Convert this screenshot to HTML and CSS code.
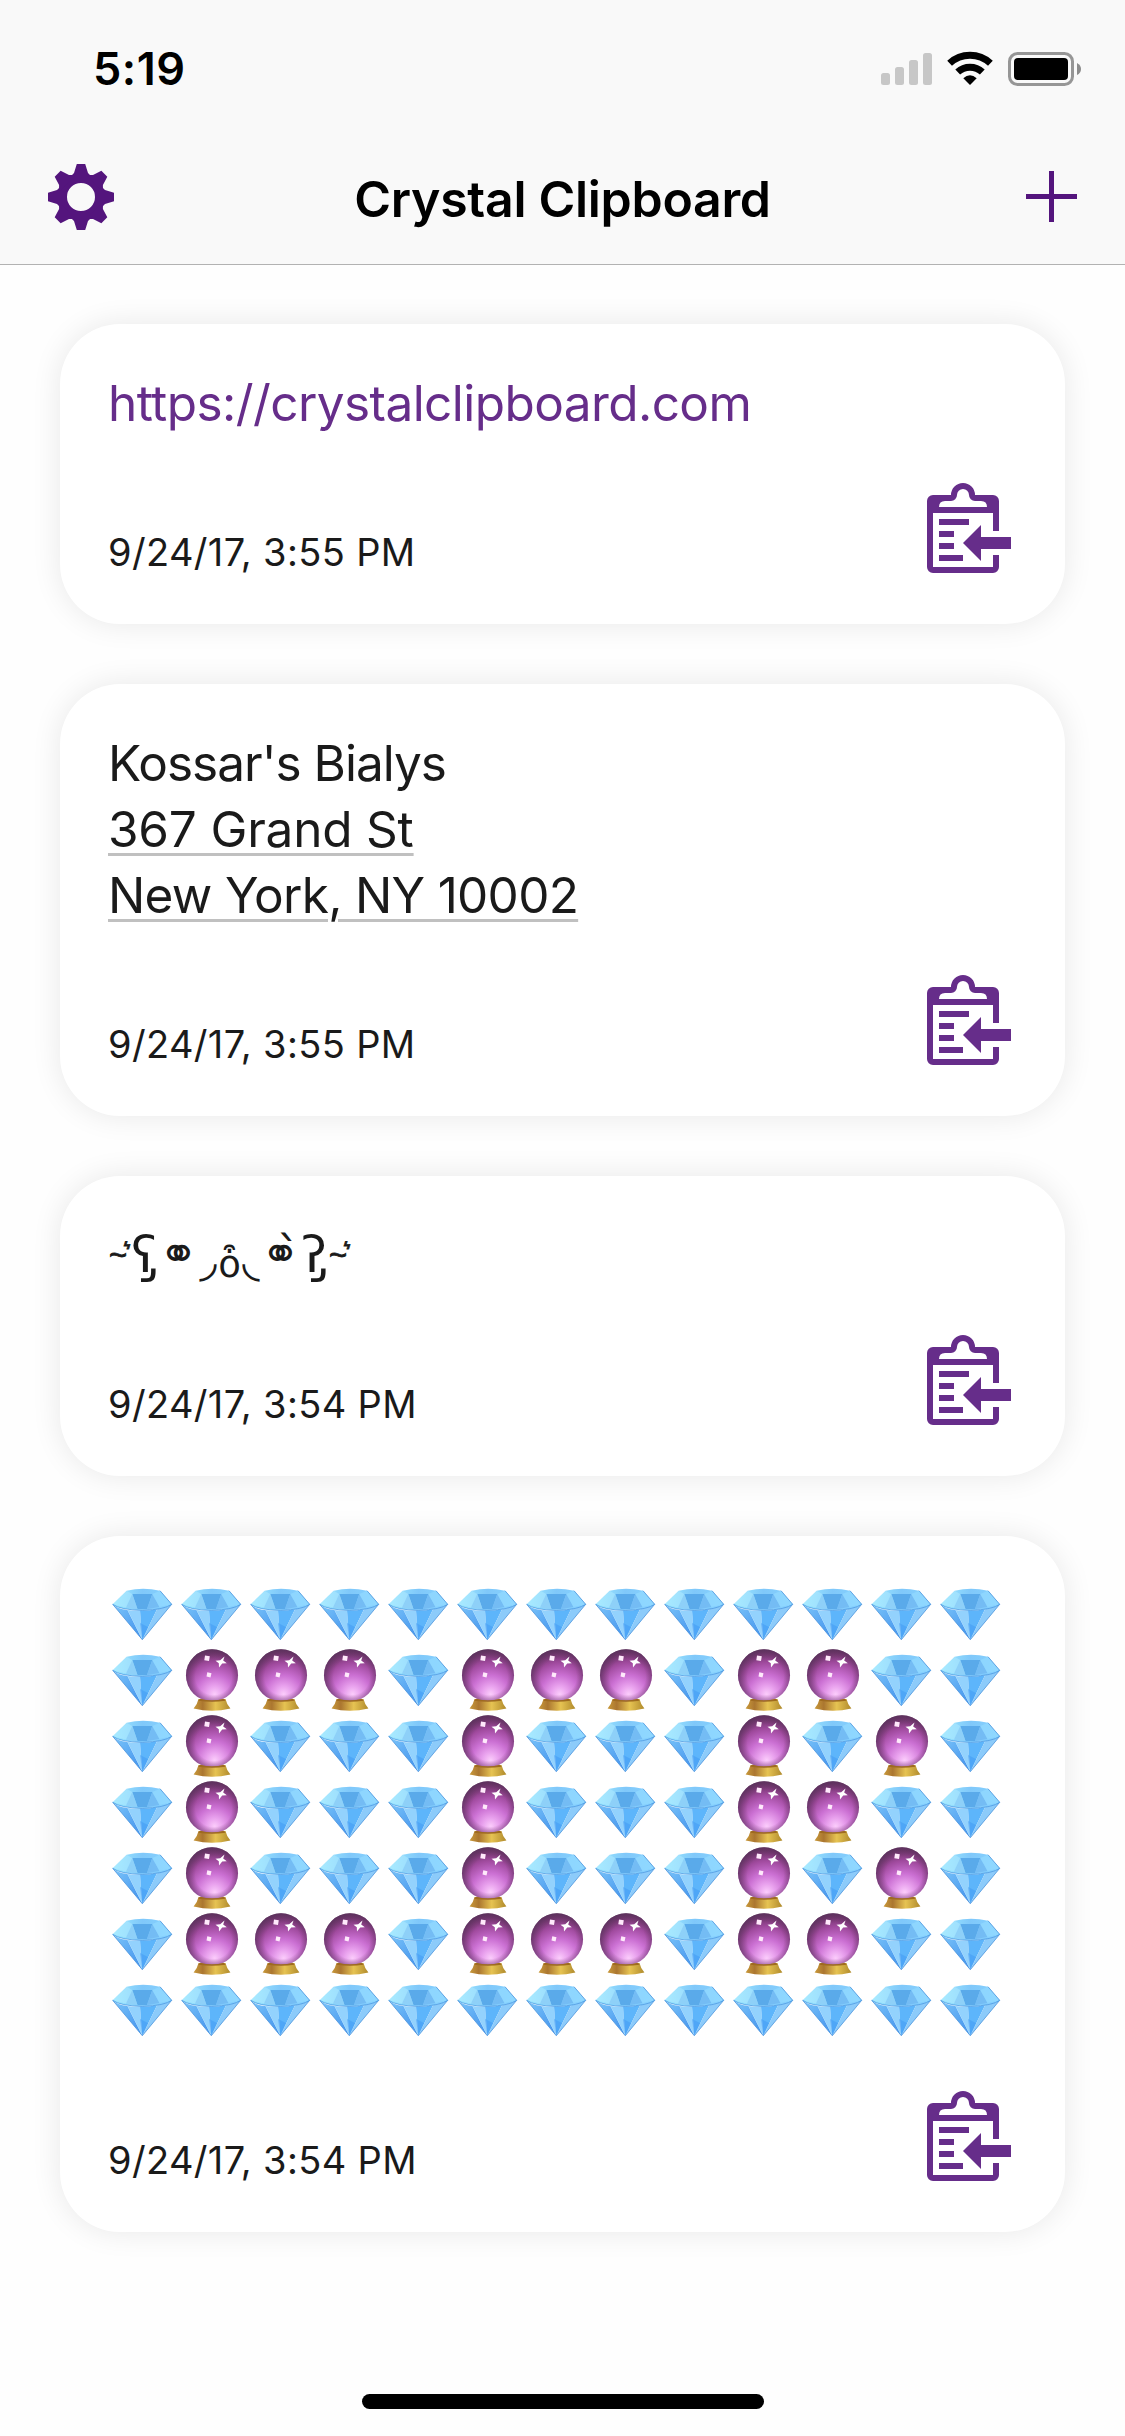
FILE: index.html
```html
<!DOCTYPE html>
<html lang="en">
<head>
<meta charset="utf-8">
<title>Crystal Clipboard</title>
<link rel="stylesheet" href="styles.css">
</head>
<body>
<svg class="defs" width="0" height="0" aria-hidden="true">
  <defs>
    <linearGradient id="gem-left" x1="0" y1="0" x2="1" y2="1"><stop offset="0" stop-color="#7cc6fa"/><stop offset="1" stop-color="#3f8fec"/></linearGradient>
    <linearGradient id="gem-crown" x1="0" y1="0" x2="1" y2="0"><stop offset="0" stop-color="#9deaff"/><stop offset=".5" stop-color="#80c8fa"/><stop offset="1" stop-color="#86d2ff"/></linearGradient>
    <radialGradient id="orb" cx=".55" cy=".86" r=".86"><stop offset="0" stop-color="#fbccfb"/><stop offset=".18" stop-color="#e9a2ee"/><stop offset=".42" stop-color="#cb70d3"/><stop offset=".7" stop-color="#a04a9e"/><stop offset="1" stop-color="#5e2c58"/></radialGradient>
    <radialGradient id="orb-rim" cx=".53" cy=".53" r=".53"><stop offset=".65" stop-color="#6b3566" stop-opacity="0"/><stop offset="1" stop-color="#5b345f" stop-opacity=".7"/></radialGradient>
    <linearGradient id="gold" x1="0" y1="0" x2="1" y2="0"><stop offset="0" stop-color="#c99a3a"/><stop offset=".25" stop-color="#ab7630"/><stop offset=".6" stop-color="#e6c352"/><stop offset="1" stop-color="#b08a2c"/></linearGradient>
    <symbol id="gem" viewBox="0 0 69 66">
      <path fill="url(#gem-crown)" d="M4.7 21.3 18.7 7.7Q35 3.6 52 7.7L63.7 21.3Q60 26 34.3 27.5 9 26 4.7 21.3z"/>
      <path fill="#5aaaea" d="M24.3 11H44.3L39 26H29.5z"/>
      <path fill="#8ed0f8" d="M24.3 11 29.5 26 18 24.5z"/>
      <path fill="#74bcf4" d="M44.3 11 39 26 51.5 24z"/>
      <path fill="#b4ecff" d="M18.7 7.7 24.3 11 18 24.5 4.7 21.3z" opacity=".5"/>
      <path fill="#93daff" d="M52 7.7 44.3 11 51.5 24 63.7 21.3z" opacity=".7"/>
      <path fill="url(#gem-left)" d="M4.7 21.3Q9 26 19.5 27L34.3 56.7z"/>
      <path fill="#93d2fd" d="M19.5 27Q25 27.8 32 27.5L34.3 56.7z"/>
      <path fill="#5db5fb" d="M32 27.5Q40 28 49 26.2L34.3 56.7z"/>
      <path fill="#8ccbfa" d="M49 26.2Q58 25 63.7 21.3L34.3 56.7z"/>
      <path fill="#3f97f4" d="M32 40 34.3 56.7 40 44z" opacity=".5"/>
      <path fill="none" stroke="#4a98e2" stroke-width=".8" d="M4.7 21.3Q12 26.8 34.3 27.4 57 26.6 63.7 21.3"/>
      <path fill="none" stroke="#4a93dc" stroke-width=".8" d="M4.7 21.3 34.3 56.7 63.7 21.3 52 7.7"/>
    </symbol>
    <symbol id="ball" viewBox="0 0 69 66">
      <path fill="url(#gold)" d="M21.5 50H48.5Q49.5 55 53.4 59.5 35 64 16.6 59.5 20.5 55 21.5 50z"/>
      <circle cx="35" cy="26.3" r="26" fill="url(#orb)"/>
      <circle cx="35" cy="26.3" r="26" fill="url(#orb-rim)"/>
      <path fill="#9e6a20" d="M23 49.7Q35 52.7 47 49.7L48.5 51.7Q35 53.7 21.5 51.7z"/>
      <path fill="#ffe9fb" d="M28 6.5 32.8 7.3 32 12 27.3 11.3zM30.3 23.3 34.5 24.3 33.5 28.5 29.5 27.5z"/>
      <path fill="#fff" d="M47.5 7.5 46.2 11.5 49.8 14.2 45.2 14.6 42 18.5 41.8 14.2 38.5 11.8 43.2 11.3z"/>
    </symbol>
    <symbol id="paste" viewBox="0 0 84 90">
      <path fill-rule="evenodd" d="M6 12H24A12 12 0 0 1 48 12H66a6 6 0 0 1 6 6V48H66V30H6V84H66V72H72V84a6 6 0 0 1-6 6H6a6 6 0 0 1-6-6V18a6 6 0 0 1 6-6zM12 24H60Q60 18 54 18H48A6 6 0 0 1 42 12 6 6 0 0 0 30 12 6 6 0 0 1 24 18H18Q12 18 12 24z"/>
      <path d="M12 36H42V42H12zM12 48H27V54H12zM12 60H27V66H12zM12 72H36V78H12zM36 60 54 42V54H84V66H54V78z"/>
    </symbol>
  </defs>
</svg>
<header class="header">
  <div class="status">
    <span class="time">5:19</span>
    <svg class="status-icons" viewBox="0 0 201 36" aria-hidden="true">
      <g fill="#c7c7c7"><rect x="0" y="22" width="9" height="12" rx="2.5"/><rect x="14" y="16" width="9" height="18" rx="2.5"/><rect x="28" y="9" width="9" height="25" rx="2.5"/><rect x="42" y="2" width="9" height="32" rx="2.5"/></g>
      <g fill="none" stroke="#000" stroke-width="7"><path d="M68.6 12.3A30 30 0 0 1 109.4 12.3"/><path d="M76.7 21A18 18 0 0 1 101.3 21"/></g>
      <path d="M82.3 27.2Q89 21.5 95.7 27.2L89 34z"/>
      <rect x="128.5" y="2.5" width="63" height="31" rx="8" fill="none" stroke="#969696" stroke-width="3"/>
      <rect x="133" y="7" width="54" height="22" rx="4"/>
      <path fill="#8c8c8c" d="M196 12Q200 14 200 18T196 24z"/>
    </svg>
  </div>
  <nav class="nav">
    <svg class="gear" viewBox="-33 -33 66 66" aria-label="Settings">
      <defs><path id="tooth" d="M-4.2-33H4.2L7-24 12-19H-12L-7-24z"/></defs>
      <circle r="18.5" fill="none" stroke="currentColor" stroke-width="9"/>
      <use href="#tooth"/><use href="#tooth" transform="rotate(45)"/><use href="#tooth" transform="rotate(90)"/><use href="#tooth" transform="rotate(135)"/><use href="#tooth" transform="rotate(180)"/><use href="#tooth" transform="rotate(225)"/><use href="#tooth" transform="rotate(270)"/><use href="#tooth" transform="rotate(315)"/>
    </svg>
    <h1 class="title">Crystal Clipboard</h1>
    <svg class="plus" viewBox="0 0 51 51" aria-label="Add"><path d="M0 23H23V0H28V23H51V28H28V51H23V28H0z"/></svg>
  </nav>
</header>
<main class="clips">
  <article class="card">
    <div class="text"><a class="url">https://crystalclipboard.com</a></div>
    <footer class="foot"><time class="date">9/24/17, 3:55 PM</time><svg class="paste"><use href="#paste"/></svg></footer>
  </article>
  <article class="card">
    <div class="text"><span class="name">Kossar's Bialys</span><br><a class="address street">367 Grand St</a><br><a class="address city">New York, NY 10002</a></div>
    <footer class="foot"><time class="date">9/24/17, 3:55 PM</time><svg class="paste"><use href="#paste"/></svg></footer>
  </article>
  <article class="card">
    <div class="text face"><span class="wave">~͛</span><span class="ear">ʕ̡</span><span class="eye">⚭</span><span class="cheek">◞</span><span class="nose">o͒</span><span class="cheek">◟</span><span class="eye">⚭̀</span><span class="ear">ʔ̡</span><span class="wave">~͛</span></div>
    <footer class="foot"><time class="date">9/24/17, 3:54 PM</time><svg class="paste"><use href="#paste"/></svg></footer>
  </article>
  <article class="card">
    <div class="emoji">
      <svg><use href="#gem"/></svg><svg><use href="#gem"/></svg><svg><use href="#gem"/></svg><svg><use href="#gem"/></svg><svg><use href="#gem"/></svg><svg><use href="#gem"/></svg><svg><use href="#gem"/></svg><svg><use href="#gem"/></svg><svg><use href="#gem"/></svg><svg><use href="#gem"/></svg><svg><use href="#gem"/></svg><svg><use href="#gem"/></svg><svg><use href="#gem"/></svg>
      <svg><use href="#gem"/></svg><svg><use href="#ball"/></svg><svg><use href="#ball"/></svg><svg><use href="#ball"/></svg><svg><use href="#gem"/></svg><svg><use href="#ball"/></svg><svg><use href="#ball"/></svg><svg><use href="#ball"/></svg><svg><use href="#gem"/></svg><svg><use href="#ball"/></svg><svg><use href="#ball"/></svg><svg><use href="#gem"/></svg><svg><use href="#gem"/></svg>
      <svg><use href="#gem"/></svg><svg><use href="#ball"/></svg><svg><use href="#gem"/></svg><svg><use href="#gem"/></svg><svg><use href="#gem"/></svg><svg><use href="#ball"/></svg><svg><use href="#gem"/></svg><svg><use href="#gem"/></svg><svg><use href="#gem"/></svg><svg><use href="#ball"/></svg><svg><use href="#gem"/></svg><svg><use href="#ball"/></svg><svg><use href="#gem"/></svg>
      <svg><use href="#gem"/></svg><svg><use href="#ball"/></svg><svg><use href="#gem"/></svg><svg><use href="#gem"/></svg><svg><use href="#gem"/></svg><svg><use href="#ball"/></svg><svg><use href="#gem"/></svg><svg><use href="#gem"/></svg><svg><use href="#gem"/></svg><svg><use href="#ball"/></svg><svg><use href="#ball"/></svg><svg><use href="#gem"/></svg><svg><use href="#gem"/></svg>
      <svg><use href="#gem"/></svg><svg><use href="#ball"/></svg><svg><use href="#gem"/></svg><svg><use href="#gem"/></svg><svg><use href="#gem"/></svg><svg><use href="#ball"/></svg><svg><use href="#gem"/></svg><svg><use href="#gem"/></svg><svg><use href="#gem"/></svg><svg><use href="#ball"/></svg><svg><use href="#gem"/></svg><svg><use href="#ball"/></svg><svg><use href="#gem"/></svg>
      <svg><use href="#gem"/></svg><svg><use href="#ball"/></svg><svg><use href="#ball"/></svg><svg><use href="#ball"/></svg><svg><use href="#gem"/></svg><svg><use href="#ball"/></svg><svg><use href="#ball"/></svg><svg><use href="#ball"/></svg><svg><use href="#gem"/></svg><svg><use href="#ball"/></svg><svg><use href="#ball"/></svg><svg><use href="#gem"/></svg><svg><use href="#gem"/></svg>
      <svg><use href="#gem"/></svg><svg><use href="#gem"/></svg><svg><use href="#gem"/></svg><svg><use href="#gem"/></svg><svg><use href="#gem"/></svg><svg><use href="#gem"/></svg><svg><use href="#gem"/></svg><svg><use href="#gem"/></svg><svg><use href="#gem"/></svg><svg><use href="#gem"/></svg><svg><use href="#gem"/></svg><svg><use href="#gem"/></svg><svg><use href="#gem"/></svg>
    </div>
    <footer class="foot"><time class="date">9/24/17, 3:54 PM</time><svg class="paste"><use href="#paste"/></svg></footer>
  </article>
</main>
<div class="home-indicator"></div>
</body>
</html>
```
FILE: styles.css
```css
* { box-sizing: border-box; }

body {
  margin: 0;
  width: 1125px;
  height: 2436px;
  display: flex;
  flex-direction: column;
  background: #fefefe;
  color: #1a1a1a;
  font-family: Inter, "Liberation Sans", sans-serif;
  overflow: hidden;
}

.defs { position: absolute; }

.header {
  height: 265px;
  background: #f9f9f9;
  border-bottom: 1px solid #b2b2b2;
  color: #000;
}

.status {
  height: 132px;
  padding: 37px 43px 0 93px;
  display: flex;
  justify-content: space-between;
  align-items: flex-start;
}

.time {
  font-size: 45px;
  line-height: 64px;
  font-weight: 600;
  letter-spacing: 0.5px;
}

.status-icons {
  width: 201px;
  height: 36px;
  margin-top: 14px;
}

.nav {
  height: 132px;
  padding: 0 48px;
  display: flex;
  justify-content: space-between;
  align-items: flex-start;
  color: #54157d;
}

.gear {
  width: 66px;
  height: 66px;
  margin-top: 32px;
  fill: currentColor;
}

.title {
  margin: 34px 0 0 -15px;
  color: #000;
  font-size: 50px;
  line-height: 66px;
  font-weight: 600;
  letter-spacing: -0.3px;
}

.plus {
  width: 51px;
  height: 51px;
  margin-top: 39px;
  fill: currentColor;
}

.clips {
  flex: 1;
  display: flex;
  flex-direction: column;
  gap: 60px;
  padding: 59px 60px 0;
}

.card {
  padding: 46px 54px 51px 48px;
  border-radius: 60px;
  background: #fff;
  box-shadow: 0 0 30px rgba(0, 0, 0, 0.09);
}

.text {
  font-size: 49.5px;
  line-height: 66px;
}

.url {
  color: #662d8a;
  letter-spacing: -0.57px;
}

.name { letter-spacing: -1px; }
.street { letter-spacing: -0.2px; }
.city { letter-spacing: -0.7px; }

.address {
  text-decoration: underline #c0c0c0 3px;
  text-underline-offset: 6px;
}

.foot {
  margin-top: 47px;
  height: 90px;
  display: flex;
  justify-content: space-between;
  align-items: flex-end;
}

.date {
  font-size: 38px;
  line-height: 42px;
  letter-spacing: 0.35px;
}

.paste {
  width: 84px;
  height: 90px;
  fill: #662d8a;
}

.face {
  height: 66px;
  display: flex;
  font-family: "DejaVu Sans", sans-serif;
}

.face span {
  flex: none;
  display: flex;
  justify-content: center;
  height: 66px;
  white-space: nowrap;
}

.wave { width: 20px; font-size: 31px; -webkit-text-stroke: 0.8px; }
.ear { width: 32px; font-size: 50px; }
.eye { width: 37px; font-size: 47px; margin-top: -1px; }
.cheek { width: 22px; font-size: 45px; margin-top: 6px; }
.nose { width: 21px; font-size: 37px; margin-top: 10px; }
.cheek + .eye { width: 37px; }
.eye + .ear { width: 30px; }
.ear + .wave { margin-left: -1px; }

.emoji {
  margin-top: 1px;
  margin-bottom: -1px;
  display: grid;
  grid-template-columns: repeat(13, 69px);
  grid-auto-rows: 66px;
}

.emoji svg { width: 69px; height: 66px; }

.home-indicator {
  flex: none;
  align-self: center;
  width: 402px;
  height: 15px;
  margin-bottom: 27px;
  border-radius: 8px;
  background: #000;
}
```
